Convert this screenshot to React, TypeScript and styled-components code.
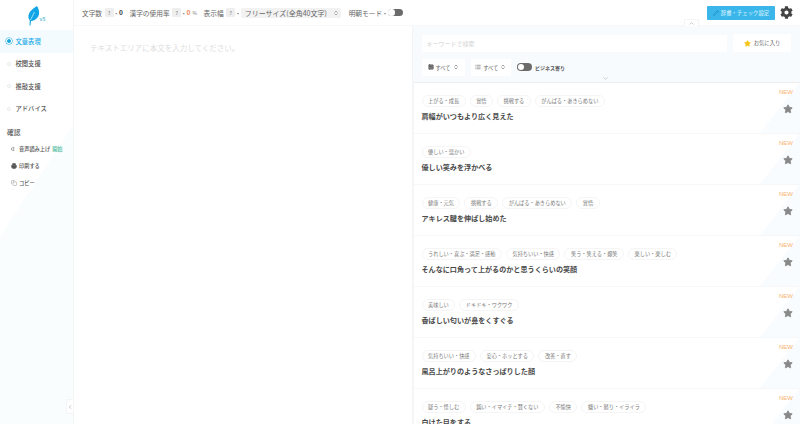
import React from "react";
import styled, { createGlobalStyle } from "styled-components";
import { Volume, Printer, Copy, ChevronUp, ChevronDown, ChevronLeft, ChevronsUpDown, Star, Pencil, Image, List } from "lucide-react";
import { FaCog } from "react-icons/fa";

const items = [
  { tags: ["上がる・成長", "覚悟", "挑戦する", "がんばる・あきらめない"], title: "肩幅がいつもより広く見えた" },
  { tags: ["優しい・温かい"], title: "優しい笑みを浮かべる" },
  { tags: ["健康・元気", "挑戦する", "がんばる・あきらめない", "覚悟"], title: "アキレス腱を伸ばし始めた" },
  { tags: ["うれしい・喜ぶ・満足・感動", "気持ちいい・快感", "笑う・笑える・爆笑", "楽しい・楽しむ"], title: "そんなに口角って上がるのかと思うくらいの笑顔" },
  { tags: ["美味しい", "ドキドキ・ワクワク"], title: "香ばしい匂いが鼻をくすぐる" },
  { tags: ["気持ちいい・快感", "安心・ホッとする", "改善・直す"], title: "風呂上がりのようなさっぱりした顔" },
  { tags: ["疑う・怪しむ", "鈍い・イマイチ・賢くない", "不愉快", "嫌い・怒り・イライラ"], title: "白けた目をする" },
];

const App: React.FC = () => {
  return (
    <Page>
      <GlobalStyle />
      <Sidebar>
        <LogoBox>
          <svg width="13" height="20" viewBox="0 0 13 20">
            <path d="M10 0 C13 5 13 10 9 13 C7.500 14.500 5 15 4 15 L3.500 19.500 L2.500 19.500 L2.800 14.500 C0 11 1 5 10 0 Z" fill="#12a5e6" />
            <path d="M3.500 14 L7.500 6" stroke="#fff" strokeWidth="0.6" />
          </svg>
          <Version>v5</Version>
        </LogoBox>
        <NavItem $active>
          <Radio $active />
          文章表現
        </NavItem>
        <NavItem>
          <Radio />
          校閲支援
        </NavItem>
        <NavItem>
          <Radio />
          推敲支援
        </NavItem>
        <NavItem>
          <Radio />
          アドバイス
        </NavItem>
        <SectionTitle>確認</SectionTitle>
        <SubItem>
          <Volume size={6} />
          音声読み上げ <Start>開始</Start>
        </SubItem>
        <SubItem>
          <Printer size={6} fill="#555" />
          印刷する
        </SubItem>
        <SubItem>
          <Copy size={6} color="#999" />
          コピー
        </SubItem>
        <CollapseTab>
          <ChevronLeft size={6} />
        </CollapseTab>
      </Sidebar>
      <Main>
        <Header>
          <Stat>文字数</Stat>
          <Help>?</Help>
          <Dot>·</Dot>
          <Count>0</Count>
          <Stat $gap>漢字の使用率</Stat>
          <Help>?</Help>
          <Dot>·</Dot>
          <Count $orange>0</Count>
          <Percent>%</Percent>
          <Stat $gap>表示幅</Stat>
          <Help>?</Help>
          <Dot>·</Dot>
          <WidthSelect>
            フリーサイズ(全角40文字)
            <ChevronsUpDown size={6} />
          </WidthSelect>
          <Stat $gap>明朝モード</Stat>
          <Dot>·</Dot>
          <Toggle />
          <HeaderRight>
            <DictButton>
              <Pencil size={6} color="#1b86bd" />
              辞書・チェック設定
            </DictButton>
            <FaCog size={13} color="#444" />
          </HeaderRight>
        </Header>
        <Body>
          <Editor>テキストエリアに本文を入力してください。</Editor>
          <Results>
            <UpTab>
              <ChevronUp size={7} />
            </UpTab>
            <Filters>
              <SearchRow>
                <Search>キーワードで検索</Search>
                <FavButton>
                  <Star size={7} fill="#f5c518" color="#f5c518" />
                  お気に入り
                </FavButton>
              </SearchRow>
              <FilterRow>
                <FilterSelect $width={43}>
                  <Image size={6} color="#444" fill="#888" />
                  すべて
                  <ChevronsUpDown size={6} color="#444" />
                </FilterSelect>
                <FilterSelect $width={40.5}>
                  <List size={6} color="#444" />
                  すべて
                  <ChevronsUpDown size={6} color="#444" />
                </FilterSelect>
                <Toggle />
                <BusinessLabel>ビジネス寄り</BusinessLabel>
              </FilterRow>
              <DownMark>
                <ChevronDown size={7} />
              </DownMark>
            </Filters>
            <ResultList>
              {items.map((item, i) => (
                <Item key={i}>
                  <Tags>
                    {item.tags.map((t) => (
                      <Tag key={t}>{t}</Tag>
                    ))}
                  </Tags>
                  <Title>{item.title}</Title>
                  <NewMark>NEW</NewMark>
                  <FavStar>
                    <Star size={10} fill="#888" color="#888" />
                  </FavStar>
                </Item>
              ))}
            </ResultList>
          </Results>
        </Body>
      </Main>
    </Page>
  );
};

export default App;

const GlobalStyle = createGlobalStyle`
  html, body {
    margin: 0;
    height: 100%;
    overflow: hidden;
    background: #fff;
  }
  * {
    box-sizing: border-box;
  }
  body {
    font-family: "Noto Sans CJK JP", "Noto Sans", sans-serif;
    color: #555;
  }
`;

const Page = styled.div`
  display: flex;
  width: 800px;
  height: 424px;
  overflow: hidden;
`;

const Sidebar = styled.aside`
  position: relative;
  flex: 0 0 74px;
  display: flex;
  flex-direction: column;
  border-right: 1px solid #f3f5f6;
  background:
    linear-gradient(to bottom right, transparent 50%, #f9fdfe 50%) 0 124px / 74px 112px no-repeat,
    linear-gradient(#f9fdfe, #f9fdfe) 0 236px / 100% 100% no-repeat;
`;

const LogoBox = styled.div`
  position: relative;
  height: 30px;
  padding: 6px 0 0 27px;
`;

const Version = styled.span`
  position: absolute;
  left: 39.500px;
  top: 15px;
  font-size: 5px;
  font-weight: 700;
  color: #6bbfd6;
`;

const NavItem = styled.div<{ $active?: boolean }>`
  height: 22.500px;
  display: flex;
  align-items: center;
  gap: 4.500px;
  padding-left: 7px;
  font-size: 6.300px;
  font-weight: 500;
  color: ${(p) => (p.$active ? "#19a9e5" : "#555")};
  background: ${(p) => (p.$active ? "#f3fbff" : "transparent")};
`;

const Radio = styled.span<{ $active?: boolean }>`
  width: 4px;
  height: 4px;
  border-radius: 50%;
  flex: none;
  border: 1px solid ${(p) => (p.$active ? "#19a9e5" : "#e9ebed")};
  background: ${(p) => (p.$active ? "#19a9e5" : "#fff")};
  box-shadow: ${(p) => (p.$active ? "0 0 0 1px #fff, 0 0 0 1.500px #19a9e5" : "none")};
`;

const SectionTitle = styled.div`
  margin: 7px 0 3px 7px;
  font-size: 6.700px;
  font-weight: 500;
  color: #555;
`;

const SubItem = styled.div`
  height: 17px;
  display: flex;
  align-items: center;
  gap: 2px;
  padding-left: 11px;
  font-size: 5.200px;
  font-weight: 500;
  color: #555;
`;

const Start = styled.span`
  color: #49b99c;
`;

const CollapseTab = styled.div`
  position: absolute;
  right: 0;
  bottom: 10px;
  width: 7px;
  height: 15px;
  display: flex;
  align-items: center;
  justify-content: center;
  color: #999;
  background: #fff;
  border: 1px solid #f3f5f6;
  border-right: none;
`;

const Main = styled.main`
  flex: 1;
  min-width: 0;
  display: flex;
  flex-direction: column;
`;

const Header = styled.header`
  flex: 0 0 26px;
  display: flex;
  align-items: center;
  padding: 0 7px 0 8px;
  font-size: 6.700px;
  border-bottom: 1px solid #f6f7f8;
`;

const Stat = styled.span<{ $gap?: boolean }>`
  margin-left: ${(p) => (p.$gap ? "6.5px" : "0")};
  color: #666;
`;

const Help = styled.span`
  flex: none;
  width: 9px;
  height: 9px;
  margin-left: 2.500px;
  display: flex;
  align-items: center;
  justify-content: center;
  border-radius: 1px;
  font-size: 5px;
  color: #777;
  background: #eeeeee;
`;

const Dot = styled.span`
  flex: none;
  width: 5.500px;
  text-align: center;
  font-weight: 700;
  color: #666;
`;

const Count = styled.span<{ $orange?: boolean }>`
  font-family: "Liberation Sans", sans-serif;
  font-size: 7px;
  font-weight: 700;
  color: ${(p) => (p.$orange ? "#f08a5d" : "#444")};
`;

const Percent = styled.span`
  margin-left: 2px;
  font-size: 5px;
  color: #777;
`;

const WidthSelect = styled.span`
  flex: none;
  width: 100px;
  height: 10px;
  margin-right: 1.500px;
  padding: 0 2px 0 4px;
  display: flex;
  align-items: center;
  justify-content: space-between;
  border-radius: 2px;
  font-size: 7px;
  color: #666;
  background: #f2f2f2;
`;

const Toggle = styled.span`
  position: relative;
  flex: none;
  width: 15px;
  height: 7.500px;
  border-radius: 4px;
  background: #6b6b6b;
  &::after {
    content: "";
    position: absolute;
    left: 0.500px;
    top: 0.500px;
    width: 6.500px;
    height: 6.500px;
    border-radius: 50%;
    background: #fff;
  }
`;

const HeaderRight = styled.div`
  margin-left: auto;
  display: flex;
  align-items: center;
  gap: 5px;
`;

const DictButton = styled.div`
  width: 68px;
  height: 14px;
  display: flex;
  align-items: center;
  justify-content: center;
  gap: 2px;
  border-radius: 1px;
  font-size: 5.400px;
  font-weight: 500;
  color: #c4ebfa;
  background: #3bb6ea;
`;

const Body = styled.div`
  flex: 1;
  min-height: 0;
  display: flex;
`;

const Editor = styled.div`
  flex: 0 0 339px;
  padding: 15.500px 16px;
  font-size: 7.500px;
  color: #dedede;
  border-right: 1px solid #f3f5f6;
`;

const Results = styled.section`
  position: relative;
  flex: 1;
  min-width: 0;
  display: flex;
  flex-direction: column;
`;

const UpTab = styled.div`
  position: absolute;
  top: -7px;
  left: 271px;
  width: 15px;
  height: 7px;
  display: flex;
  align-items: center;
  justify-content: center;
  color: #aaa;
  background: #fff;
  border: 1px solid #f3f5f6;
  border-bottom: none;
`;

const Filters = styled.div`
  position: relative;
  flex: 0 0 57px;
  padding: 8px 9px 0 8.500px;
  background: #f7fbfe;
  border-bottom: 1px solid #eeeeee;
`;

const SearchRow = styled.div`
  display: flex;
  align-items: center;
  justify-content: space-between;
`;

const Search = styled.div`
  width: 305px;
  height: 17px;
  padding-left: 5px;
  display: flex;
  align-items: center;
  font-size: 6px;
  color: #d4d4d4;
  background: #fff;
`;

const FavButton = styled.div`
  width: 58px;
  height: 18px;
  display: flex;
  align-items: center;
  justify-content: center;
  gap: 3px;
  font-size: 5.300px;
  color: #666;
  background: #fff;
`;

const FilterRow = styled.div`
  margin-top: 6.500px;
  display: flex;
  align-items: center;
  gap: 6px;
`;

const FilterSelect = styled.div<{ $width: number }>`
  width: ${(p) => p.$width}px;
  height: 17px;
  display: flex;
  align-items: center;
  justify-content: center;
  gap: 2px;
  font-size: 5.200px;
  color: #666;
  background: #fff;
`;

const BusinessLabel = styled.span`
  margin-left: -3px;
  font-size: 5px;
  font-weight: 700;
  color: #555;
`;

const DownMark = styled.div`
  position: absolute;
  left: 189px;
  bottom: 0;
  display: flex;
  color: #aaa;
`;

const ResultList = styled.div`
  flex: 1;
  min-height: 0;
  overflow: hidden;
  border-left: 1px solid #f3f5f6;
`;

const Item = styled.article`
  position: relative;
  height: 51px;
  padding: 11.500px 0 0 7.500px;
  border-bottom: 1px solid #f6f7f8;
  background: linear-gradient(to bottom right, transparent 50%, #f8fcfe 50%) right bottom / 40px 51px no-repeat;
`;

const Tags = styled.div`
  display: flex;
  gap: 4px;
`;

const Tag = styled.span`
  height: 12px;
  padding: 0 5.500px;
  display: flex;
  align-items: center;
  border: 1px solid #f5f5f5;
  border-radius: 6px;
  font-size: 5.200px;
  color: #777;
  background: #fff;
`;

const Title = styled.h3`
  margin: 4.500px 0 0;
  font-size: 7.100px;
  line-height: 11px;
  font-weight: 700;
  color: #4a4a4a;
`;

const NewMark = styled.span`
  position: absolute;
  top: 6px;
  right: 7px;
  font-family: "Liberation Sans", sans-serif;
  font-size: 6px;
  color: #f9b26e;
`;

const FavStar = styled.span`
  position: absolute;
  top: 21px;
  right: 7.500px;
  display: flex;
`;
